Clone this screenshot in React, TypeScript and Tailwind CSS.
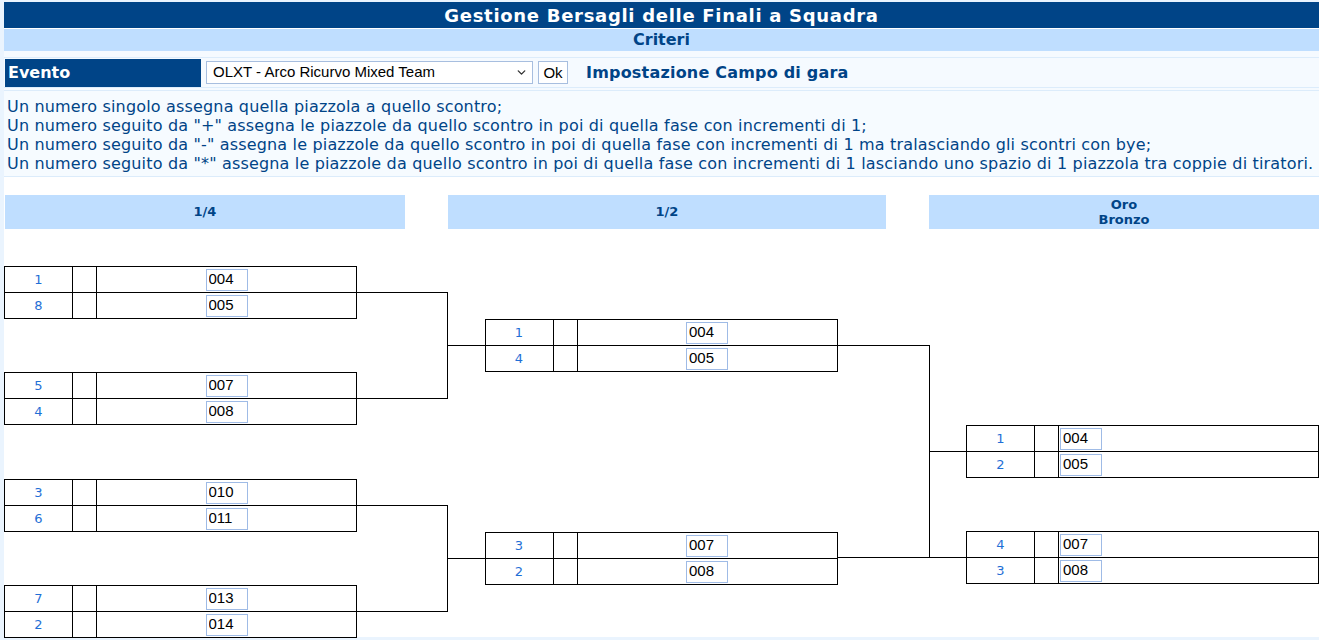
import { ChevronDown } from 'lucide-react';

type Match = { a: string; b: string; ta: string; tb: string };

const col1: Match[] = [
  { a: '1', b: '8', ta: '004', tb: '005' },
  { a: '5', b: '4', ta: '007', tb: '008' },
  { a: '3', b: '6', ta: '010', tb: '011' },
  { a: '7', b: '2', ta: '013', tb: '014' },
];
const col2: Match[] = [
  { a: '1', b: '4', ta: '004', tb: '005' },
  { a: '3', b: '2', ta: '007', tb: '008' },
];
const col3: Match[] = [
  { a: '1', b: '2', ta: '004', tb: '005' },
  { a: '4', b: '3', ta: '007', tb: '008' },
];

const rules = [
  'Un numero singolo assegna quella piazzola a quello scontro;',
  'Un numero seguito da "+" assegna le piazzole da quello scontro in poi di quella fase con incrementi di 1;',
  'Un numero seguito da "-" assegna le piazzole da quello scontro in poi di quella fase con incrementi di 1 ma tralasciando gli scontri con bye;',
  'Un numero seguito da "*" assegna le piazzole da quello scontro in poi di quella fase con incrementi di 1 lasciando uno spazio di 1 piazzola tra coppie di tiratori.',
];

function Row({ seed, target, left, last }: { seed: string; target: string; left?: boolean; last?: boolean }) {
  return (
    <div className={`flex ${last ? 'h-[25px]' : 'h-[26px] border-b border-black'}`}>
      <div className="flex w-[68px] items-center justify-center border-r border-black text-[13px] text-[#1f6fd6]">
        {seed}
      </div>
      <div className="w-[24px] border-r border-black" />
      <div className={`flex flex-1 items-center ${left ? 'justify-start pl-px' : 'justify-center'}`}>
        <input
          defaultValue={target}
          className="h-[22px] w-[42px] border border-[#9fbbe6] bg-white px-[2px] font-['Liberation_Sans',sans-serif] text-[15px] text-black outline-none"
        />
      </div>
    </div>
  );
}

function MatchBox({ m, left, className = '' }: { m: Match; left?: boolean; className?: string }) {
  return (
    <div className={`w-[353px] border border-black bg-white ${className}`}>
      <Row seed={m.a} target={m.ta} left={left} />
      <Row seed={m.b} target={m.tb} left={left} last />
    </div>
  );
}

export default function App() {
  return (
    <div className="min-h-[640px] bg-[#eaf4fe] pl-[4px] pt-[2px] font-['DejaVu_Sans',sans-serif] text-[#004487]">
      <div className="bg-white">
        <div className="flex h-[26px] items-center justify-center bg-[#004487] text-[18px] font-bold tracking-[0.7px] text-white">
          Gestione Bersagli delle Finali a Squadra
        </div>
        <div className="mt-px flex h-[22px] items-center justify-center bg-[#bfdeff] text-[16px] font-bold">
          Criteri
        </div>
        <div className="h-[7px] border-b border-[#dcecfb] bg-[#f5faff]" />
        <div className="flex h-[29px] items-center gap-[5px] bg-[#f5faff] pl-px">
          <div className="flex h-[28px] w-[196px] items-center bg-[#004487] pl-[3px] text-[16px] font-bold text-white">
            Evento
          </div>
          <div className="relative flex h-[23px] w-[327px] items-center border border-[#a7bedf] bg-white pl-[6px] font-['Liberation_Sans',sans-serif] text-[15px] text-black">
            OLXT - Arco Ricurvo Mixed Team
            <ChevronDown size={13} strokeWidth={2.5} className="absolute right-[4px] text-[#333]" />
          </div>
          <button className="h-[23px] w-[30px] border border-[#a7bedf] bg-white font-['Liberation_Sans',sans-serif] text-[15px] text-black">
            Ok
          </button>
          <div className="ml-[13px] text-[16px] font-bold tracking-[0.2px]">Impostazione Campo di gara</div>
        </div>
        <div className="h-[4px] border-y border-[#dcecfb] bg-[#f5faff]" />
        <div className="border-b border-[#dcecfb] bg-[#f6fbff] pb-[3px] pl-[3px] pt-[6px] text-[16px] leading-[19px] tracking-[0.17px]">
          {rules.map((r) => (
            <div key={r}>{r}</div>
          ))}
        </div>

        <div className="mt-[18px] flex h-[34px] text-[13px] font-bold">
          <div className="ml-px flex w-[400px] items-center justify-center bg-[#bfdeff]">1/4</div>
          <div className="ml-[43px] flex w-[438px] items-center justify-center bg-[#bfdeff]">1/2</div>
          <div className="ml-[43px] flex flex-1 flex-col items-center justify-center bg-[#bfdeff] leading-[15px]">
            <span>Oro</span>
            <span>Bronzo</span>
          </div>
        </div>

        <div className="flex h-[408px] items-start">
          <div className="flex flex-col">
            <MatchBox m={col1[0]} className="mt-[37px]" />
            <MatchBox m={col1[1]} className="mt-[53px]" />
            <MatchBox m={col1[2]} className="mt-[54px]" />
            <MatchBox m={col1[3]} className="mt-[53px]" />
          </div>

          <div className="flex w-[128px] flex-col">
            <div className="mt-[63px] flex items-center">
              <div className="h-[107px] w-[91px] border-y border-r border-black" />
              <div className="h-px flex-1 bg-black" />
            </div>
            <div className="mt-[106px] flex items-center">
              <div className="h-[107px] w-[91px] border-y border-r border-black" />
              <div className="h-px flex-1 bg-black" />
            </div>
          </div>

          <div className="flex flex-col">
            <MatchBox m={col2[0]} className="mt-[90px]" />
            <MatchBox m={col2[1]} className="mt-[160px]" />
          </div>

          <div className="mt-[116px] flex w-[129px]">
            <div className="h-[213px] w-[92px] border-y border-r border-black" />
            <div className="flex h-[213px] flex-1 flex-col">
              <div className="flex-1" />
              <div className="h-px bg-black" />
              <div className="flex-1" />
              <div className="h-px bg-black" />
            </div>
          </div>

          <div className="flex flex-col">
            <MatchBox m={col3[0]} left className="mt-[196px] w-[352px]" />
            <MatchBox m={col3[1]} left className="mt-[53px] w-[352px]" />
          </div>
        </div>
      </div>
    </div>
  );
}
